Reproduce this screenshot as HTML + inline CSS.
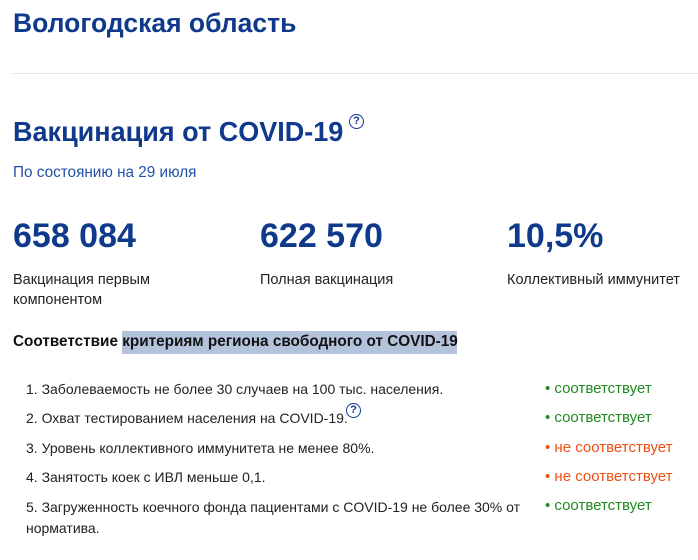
<!DOCTYPE html>
<html><head><meta charset="utf-8"><style>
body{margin:0;width:698px;height:560px;background:#fff;position:relative;overflow:hidden;font-family:"Liberation Sans",Arial,sans-serif;}
.a{position:absolute;white-space:nowrap;}
.blue{color:#0f3a8c;font-weight:bold;}
.s{display:inline-block;transform-origin:left center;}
.q{position:absolute;width:15px;height:15px;border:1.3px solid #0f3a8c;border-radius:50%;box-sizing:border-box;color:#0f3a8c;font-size:11px;font-weight:bold;text-align:center;line-height:13px;}
.row{font-size:14px;color:#222;}
.g{color:#1f8a1f;font-size:15px;}
.r{color:#f04e12;font-size:15px;}
</style></head><body>
<div class="a blue" style="left:13px;top:8px;font-size:26.5px;">Вологодская область</div>
<div class="a" style="left:13px;top:73px;width:685px;height:1px;background:#e3e3e3"></div>
<div class="a blue" style="left:13px;top:116px;font-size:28px;"><span class="s" style="transform:scaleX(0.965)">Вакцинация от COVID-19</span></div>
<div class="q" style="left:349px;top:114px">?</div>
<div class="a" style="left:13px;top:164px;font-size:15.3px;color:#2350a8;">По состоянию на 29 июля</div>
<div class="a blue" style="left:13px;top:217px;font-size:34px;">658 084</div>
<div class="a blue" style="left:260px;top:217px;font-size:34px;">622 570</div>
<div class="a blue" style="left:507px;top:217px;font-size:34px;">10,5%</div>
<div class="a row" style="left:13px;top:270px;line-height:20px;font-size:14.5px">Вакцинация первым<br>компонентом</div>
<div class="a row" style="left:260px;top:270px;line-height:20px;font-size:14.5px">Полная вакцинация</div>
<div class="a row" style="left:507px;top:270px;line-height:20px;font-size:14.5px">Коллективный иммунитет</div>
<div class="a" style="left:122px;top:331px;width:335px;height:23px;background:#b4c3dc"></div>
<div class="a" style="left:13px;top:333px;font-size:15.3px;font-weight:bold;color:#111;">Соответствие критериям региона свободного от COVID-19</div>
<div class="a row" style="left:26px;top:381px">1. Заболеваемость не более 30 случаев на 100 тыс. населения.</div>
<div class="a row" style="left:26px;top:410px">2. Охват тестированием населения на COVID-19.</div>
<div class="q" style="left:346px;top:403px">?</div>
<div class="a row" style="left:26px;top:440px">3. Уровень коллективного иммунитета не менее 80%.</div>
<div class="a row" style="left:26px;top:469px">4. Занятость коек с ИВЛ меньше 0,1.</div>
<div class="a row" style="left:26px;top:497px;line-height:21px">5. Загруженность коечного фонда пациентами с COVID-19 не более 30% от<br>норматива.</div>
<div class="a g" style="left:545px;top:380px">• соответствует</div>
<div class="a g" style="left:545px;top:409px">• соответствует</div>
<div class="a r" style="left:545px;top:439px">• не соответствует</div>
<div class="a r" style="left:545px;top:468px">• не соответствует</div>
<div class="a g" style="left:545px;top:497px">• соответствует</div>
</body></html>
